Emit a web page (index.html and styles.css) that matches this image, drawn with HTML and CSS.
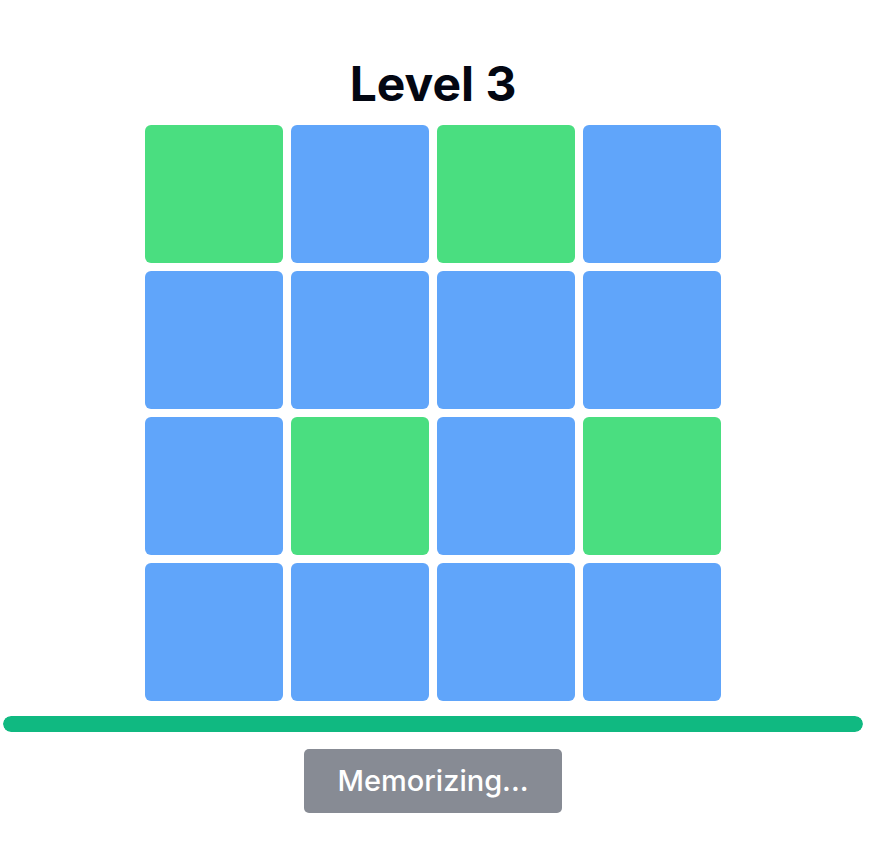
FILE: index.html
```html
<!DOCTYPE html>
<html>
<head>
  <title>Memory Grid</title>
  <link rel="stylesheet" href="styles.css">
</head>
<body>
  <div class="game">
    <h1 class="level">Level 3</h1>

    <div class="board">
      <div class="tile lit"></div>
      <div class="tile"></div>
      <div class="tile lit"></div>
      <div class="tile"></div>

      <div class="tile"></div>
      <div class="tile"></div>
      <div class="tile"></div>
      <div class="tile"></div>

      <div class="tile"></div>
      <div class="tile lit"></div>
      <div class="tile"></div>
      <div class="tile lit"></div>

      <div class="tile"></div>
      <div class="tile"></div>
      <div class="tile"></div>
      <div class="tile"></div>
    </div>

    <div class="timer"><div class="timer-fill" style="width: 100%"></div></div>

    <button class="status" disabled>Memorizing...</button>
  </div>
</body>
</html>
```

FILE: styles.css
```css
body {
  margin: 0;
  font-family: Inter, "Noto Sans", Arial, sans-serif;
  background: #fff;
}

.game {
  width: 866px;
  display: flex;
  flex-direction: column;
  align-items: center;
  padding-top: 60px;
}

.level {
  margin: 0 0 17px;
  font-size: 48px;
  line-height: 48px;
  font-weight: 700;
  color: #030712;
}

.board {
  display: grid;
  grid-template-columns: repeat(4, 138px);
  grid-auto-rows: 138px;
  gap: 8px;
}

.tile {
  background-color: #60a5fa;
  border-radius: 6px;
}

.tile.lit {
  background-color: #4ade80;
}

.timer {
  align-self: stretch;
  margin: 15px 3px 0;
  height: 16px;
  border-radius: 8px;
  overflow: hidden;
}

.timer-fill {
  height: 100%;
  background-color: #10b981;
  border-radius: 8px;
}

.status {
  margin-top: 17px;
  padding: 11px 34px;
  font-family: inherit;
  font-size: 29px;
  font-weight: 500;
  line-height: 42px;
  color: #fff;
  background-color: #878b94;
  border: none;
  border-radius: 5px;
}
```
